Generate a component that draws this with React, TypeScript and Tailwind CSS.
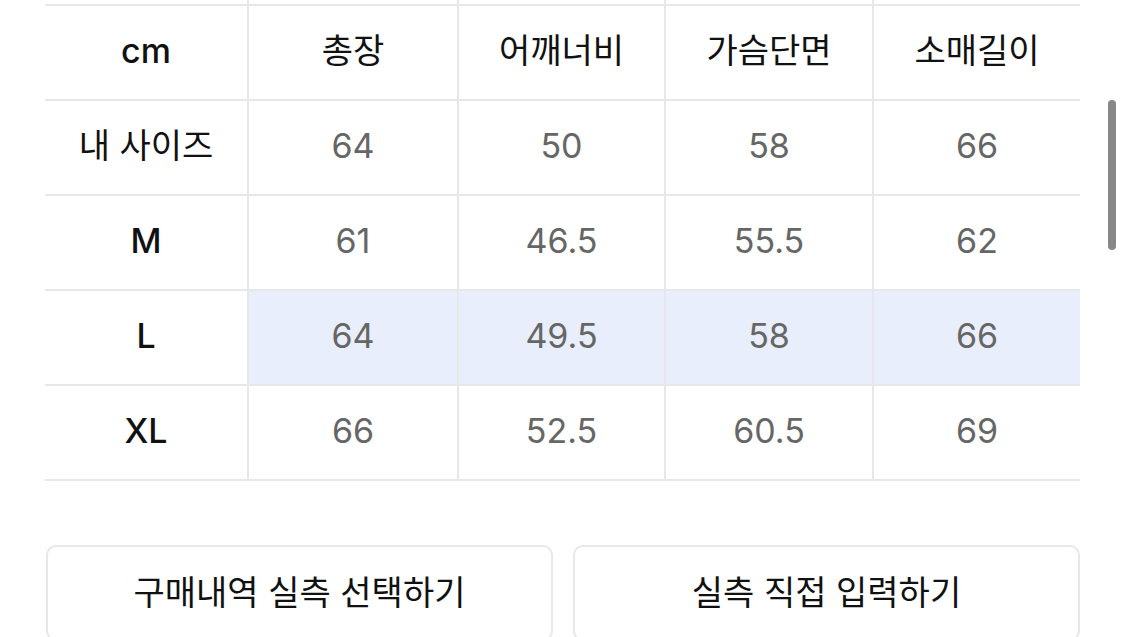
const cols = ["cm", "총장", "어깨너비", "가슴단면", "소매길이"];

const rows = [
  { label: "내 사이즈", values: ["64", "50", "58", "66"], active: false },
  { label: "M", values: ["61", "46.5", "55.5", "62"], active: false },
  { label: "L", values: ["64", "49.5", "58", "66"], active: true },
  { label: "XL", values: ["66", "52.5", "60.5", "69"], active: false },
];

const grid = "grid grid-cols-[202px_210px_207px_208px_208px]";
const line = "border-[#e7e7e7]";

// latin labels get a medium weight, hangul stays regular
const Label = ({ text }: { text: string }) => {
  const latin = /^[A-Za-z]+$/.test(text);
  return (
    <span className={latin ? "text-[34px] font-medium text-[#111]" : "text-[34px] font-normal text-[#111]"}>
      {text}
    </span>
  );
};

const App = () => {
  return (
    <div
      className="relative w-[1125px] h-[637px] overflow-hidden bg-white"
      style={{ fontFamily: 'Inter, "Noto Sans CJK KR", sans-serif' }}
    >
      <div className="ml-[45px] w-[1035px]">
        <div className={`${grid} h-[4px]`}>
          <div />
          <div className={`border-l-2 ${line}`} />
          <div className={`border-l-2 ${line}`} />
          <div className={`border-l-2 ${line}`} />
          <div className={`border-l-2 ${line}`} />
        </div>

        <div className={`${grid} h-[95px] border-t-2 ${line}`}>
          {cols.map((c, i) => (
            <div key={c} className={`flex items-center justify-center pb-[5px] ${i > 0 ? `border-l-2 ${line}` : ""}`}>
              <Label text={c} />
            </div>
          ))}
        </div>

        {rows.map((r) => (
          <div key={r.label} className={`${grid} h-[95px] border-t-2 ${line}`}>
            <div className="flex items-center justify-center pb-[5px]">
              <Label text={r.label} />
            </div>
            {r.values.map((v, i) => (
              <div
                key={i}
                className={`flex items-center justify-center pb-[5px] border-l-2 ${line} text-[34px] text-[#666] ${r.active ? "bg-[#e8eefb]" : ""}`}
              >
                {v}
              </div>
            ))}
          </div>
        ))}
        <div className={`border-t-2 ${line}`} />
      </div>

      <div className="mt-[64px] ml-[46px] w-[1034px] flex gap-[20px]">
        <button className="flex-1 h-[96px] pb-[2px] rounded-[10px] border-2 border-[#e8e8e8] bg-white text-[34px] text-[#111]">
          구매내역 실측 선택하기
        </button>
        <button className="flex-1 h-[96px] pb-[2px] rounded-[10px] border-2 border-[#e8e8e8] bg-white text-[34px] text-[#111]">
          실측 직접 입력하기
        </button>
      </div>

      <div className="absolute left-[1108px] top-[100px] w-[8px] h-[150px] rounded-full bg-[#888]" />
    </div>
  );
};

export default App;
